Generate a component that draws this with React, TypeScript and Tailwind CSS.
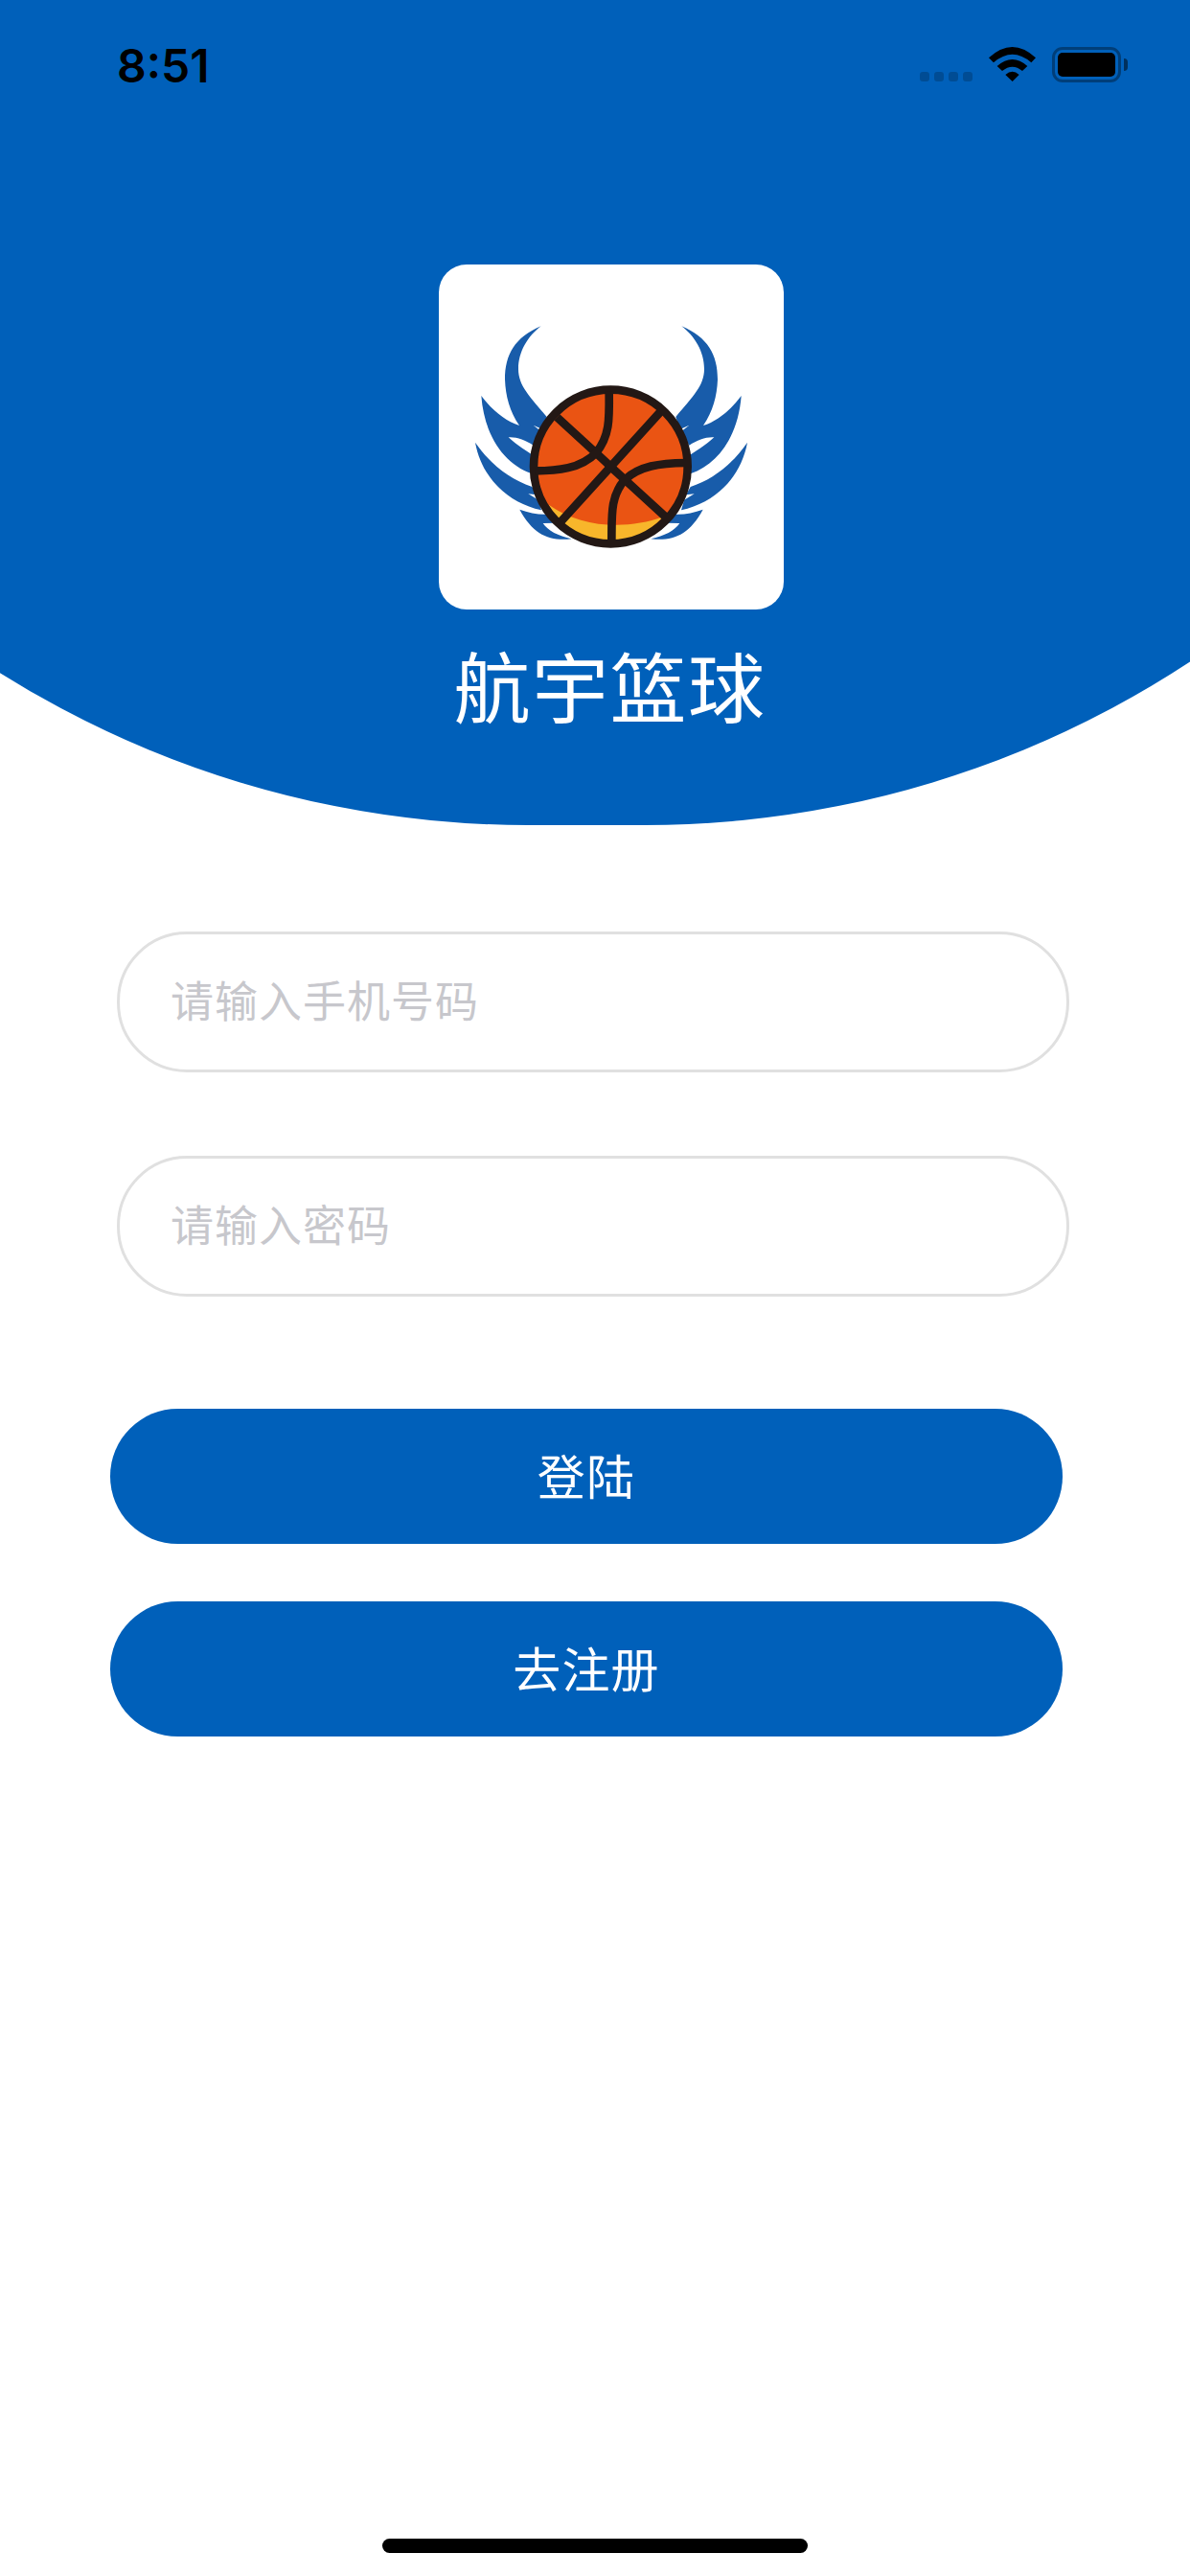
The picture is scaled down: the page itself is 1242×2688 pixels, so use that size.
function StatusBar() {
  return (
    <div className="flex h-[132px] items-start justify-between pl-[122px] pr-[65px]">
      <span className="pt-[45px] font-['Inter',sans-serif] text-[48px] leading-[48px] font-semibold text-black">8:51</span>
      <div className="flex h-[37px] items-start pt-[49px]">
        <div className="mt-[26px] flex gap-[5px]">
          {[0, 1, 2, 3].map((i) => (
            <span key={i} className="size-[10px] rounded-[3px] bg-black/20" />
          ))}
        </div>
        <svg className="ml-[17px]" width="49" height="36" viewBox="276 57 147 108">
          <path d="M276 91Q350 23 423 91L409 106Q350 55 291 106ZM302 117Q350 75 397 117L381 132Q350 106 318 132ZM328 144Q350 124 371 144L350 165Z" />
        </svg>
        <div className="ml-[17px] flex items-center">
          <div className="h-[37px] w-[72px] rounded-[11px] border-3 border-black/35 p-[3px]">
            <div className="h-[25px] w-[60px] rounded-[5px] bg-black" />
          </div>
          <div className="ml-[3px] h-[13px] w-[4px] rounded-r-full bg-black/50" />
        </div>
      </div>
    </div>
  );
}

const wing =
  "M344 211C262 246 231 300 231 378C233 430 246 478 276 522C232 508 190 474 157 429C166 550 225 641 316 673L330 622C303 606 268 583 242 559C266 557 294 567 320 584L345 541L320 521L350 535L362 495C309 431 273 398 273 345C273 291 303 242 344 211ZM138 575C158 684 237 763 345 787L336 755L304 736L330 739L316 714C245 690 185 643 138 575ZM277 785C320 864 370 885 440 877C398 868 365 851 350 828L390 827L362 800C334 801 305 795 277 785Z";

function Logo() {
  return (
    <svg width="360" height="360" viewBox="24 18 1080 1080" fill="none">
      <g fill="#185caa">
        <path d={wing} />
        <path d={wing} transform="translate(1128 0) scale(-1 1)" />
      </g>
      <circle cx="562" cy="651" r="241" fill="#ea5413" />
      <path d="M368 770C470 842 610 850 726 808C680 860 625 886 562 886C485 886 410 845 368 770Z" fill="#f8b62b" />
      <g stroke="#231815" strokeWidth="26">
        <circle cx="562" cy="651" r="241" />
        <path d="M394 496L516 608Q550 639 562 651L736 810" />
        <path d="M717 480L562 651L406 823" />
        <path d="M557 415C558 500 560 555 516 608C468 657 395 664 325 664" />
        <path d="M798 639C715 640 652 649 606 692C560 745 566 805 565 885" />
      </g>
    </svg>
  );
}

const fieldClass =
  "block h-[147px] w-[994px] rounded-[73px] border-3 border-[#e0e0e0] bg-white px-[53px] pb-[6px] text-[45px] tracking-[1px] outline-none placeholder:text-[#c7c7cc] placeholder:opacity-100";
const buttonClass =
  "flex h-[141px] w-[994px] items-center justify-center rounded-[71px] bg-[#0060ba] pb-[5px] text-[50px] tracking-[1.2px] text-white";

export default function App() {
  return (
    <main className="flex h-[2688px] w-[1242px] flex-col overflow-hidden bg-white font-['Noto_Sans_CJK_SC',sans-serif]">
      <header className="relative h-[861px] overflow-hidden">
        <div className="absolute bottom-0 left-[-484px] h-[1240px] w-[2192px] rounded-b-[1035px] bg-[#0060ba]" />
        <div className="relative">
          <StatusBar />
          <div className="flex flex-col items-center pt-[144px] pl-[34px]">
            <div className="size-[360px] overflow-hidden rounded-[29px] bg-white">
              <Logo />
            </div>
            <h1 className="mt-[18px] mr-[3px] text-[80px] leading-[118px] font-normal tracking-[1.5px] text-white">航宇篮球</h1>
          </div>
        </div>
      </header>
      <form className="flex flex-1 flex-col pt-[111px]">
        <div className="flex flex-col gap-[87px] pl-[122px]">
          <input className={fieldClass} type="tel" placeholder="请输入手机号码" />
          <input className={fieldClass} type="password" placeholder="请输入密码" />
        </div>
        <div className="mt-[117px] flex flex-col gap-[60px] pl-[115px]">
          <button type="button" className={buttonClass}>登陆</button>
          <button type="button" className={buttonClass}>去注册</button>
        </div>
      </form>
      <div className="mb-[24px] h-[15px] w-[444px] self-center rounded-full bg-black" />
    </main>
  );
}
